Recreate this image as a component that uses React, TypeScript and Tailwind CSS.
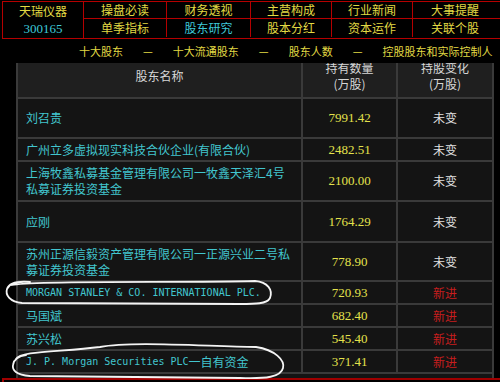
import React from 'react'

const navTop = ['操盘必读', '财务透视', '主营构成', '行业新闻', '大事提醒']
const navBottom = ['单季指标', '股东研究', '股本分红', '资本运作', '关联个股']
const navWidths = ['w-[83px]', 'w-[84px]', 'w-[81px]', 'w-[81px]', 'w-[84px]']

const subNav = ['十大股东', '—', '十大流通股东', '—', '股东人数', '—', '控股股东和实际控制人']

type Row = { name: string[]; qty: string; chg: string; h: string; mono?: boolean }

const rows: Row[] = [
  { name: ['刘召贵'], qty: '7991.42', chg: '未变', h: 'h-[40px]' },
  { name: ['广州立多虚拟现实科技合伙企业(有限合伙)'], qty: '2482.51', chg: '未变', h: 'h-[23px]' },
  { name: ['上海牧鑫私募基金管理有限公司一牧鑫天泽汇4号', '私募证券投资基金'], qty: '2100.00', chg: '未变', h: 'h-[40px]' },
  { name: ['应刚'], qty: '1764.29', chg: '未变', h: 'h-[41px]' },
  { name: ['苏州正源信毅资产管理有限公司一正源兴业二号私', '募证券投资基金'], qty: '778.90', chg: '未变', h: 'h-[39px]' },
  { name: ['MORGAN STANLEY & CO. INTERNATIONAL PLC.'], qty: '720.93', chg: '新进', h: 'h-[23px]', mono: true },
  { name: ['马国斌'], qty: '682.40', chg: '新进', h: 'h-[23px]' },
  { name: ['苏兴松'], qty: '545.40', chg: '新进', h: 'h-[23px]' },
  { name: ['J. P. Morgan Securities PLC', '一自有资金'], qty: '371.41', chg: '新进', h: 'h-[23px]', mono: true },
]

function NameCell({ row }: { row: Row }) {
  if (row.mono) {
    return (
      <div className="flex items-center pl-[8px] border-r-2 border-[#3a3a3a] whitespace-nowrap text-[#42c6cf]">
        <span className="font-['DejaVu_Sans_Mono',monospace] text-[10px]">{row.name[0]}</span>
        {row.name[1] && <span className="text-[12px]">{row.name[1]}</span>}
      </div>
    )
  }
  return (
    <div className="flex flex-col justify-center pl-[8px] border-r-2 border-[#3a3a3a] whitespace-nowrap text-[12px] leading-[16px] text-[#42c6cf]">
      {row.name.map(line => <span key={line}>{line}</span>)}
    </div>
  )
}

export default function App() {
  return (
    <div className="relative w-[500px] h-[382px] overflow-hidden bg-black font-['Noto_Sans_CJK_SC',sans-serif]">
      {/* top menu */}
      <div className="flex ml-[2px] mt-[1px] w-[560px] border-t border-l border-b border-[#b40000] text-[12px] text-[#e2da44]">
        <div className="w-[81px] h-[36px] flex flex-col items-center justify-center border-r border-[#b40000] leading-[18px]">
          <span>天瑞仪器</span>
          <span className="font-['Liberation_Serif',serif] text-[13px] text-[#3ec8d8]">300165</span>
        </div>
        <div className="flex flex-col flex-1">
          <div className="flex h-[17px] border-b border-[#b40000]">
            {navTop.map((t, i) => (
              <div key={t} className={`${navWidths[i]} flex items-center justify-center ${i < 4 ? 'border-r border-[#b40000]' : ''}`}>{t}</div>
            ))}
          </div>
          <div className="flex h-[18px]">
            {navBottom.map((t, i) => (
              <div key={t} className={`${navWidths[i]} flex items-center justify-center ${i < 4 ? 'border-r border-[#b40000]' : ''} ${t === '股东研究' ? 'text-[#3ec8d8]' : ''}`}>{t}</div>
            ))}
          </div>
        </div>
      </div>

      {/* sub menu */}
      <div className="h-[24px] flex items-center gap-[20px] pl-[79px] whitespace-nowrap text-[11px] text-[#e2da44]">
        {subNav.map((t, i) => <span key={i}>{t}</span>)}
      </div>

      {/* holders table */}
      <div className="ml-[16px] w-[478px] border-l-2 border-r-2 border-[#3a3a3a] bg-[#141414] pb-[4px]">
        <div className="h-[36px] overflow-hidden bg-[#1f1f1f] border-b-2 border-[#3a3a3a]">
          <div className="grid grid-cols-[285px_95px_94px] h-[47px] -mt-[11px] text-[12px] leading-[16px] text-[#d6d6d6]">
            <div className="flex items-center justify-center border-r-2 border-[#3a3a3a]">股东名称</div>
            <div className="flex flex-col items-center justify-center border-r-2 border-[#3a3a3a]">
              <span>持有数量</span>
              <span>(万股)</span>
            </div>
            <div className="flex flex-col items-center justify-center">
              <span>持股变化</span>
              <span>(万股)</span>
            </div>
          </div>
        </div>
        {rows.map(row => (
          <div key={row.qty} className={`grid grid-cols-[285px_95px_94px] ${row.h} border-b-2 border-[#3a3a3a]`}>
            <NameCell row={row} />
            <div className="flex items-center justify-center border-r-2 border-[#3a3a3a] font-['Liberation_Serif',serif] text-[13px] text-[#e4e24c]">
              {row.qty}
            </div>
            <div className={`flex items-center justify-center text-[12px] ${row.chg === '新进' ? 'text-[#c81e1e]' : 'text-[#e2e2e2]'}`}>
              {row.chg}
            </div>
          </div>
        ))}
      </div>
      <div className="ml-[2px] h-[12px] border-t-2 border-l-2 border-[#a00000]" />

      {/* hand drawn marks */}
      <svg className="absolute inset-0 pointer-events-none" width="500" height="382" viewBox="0 0 500 382" fill="none">
        <path
          d="M12 285 C30 280 190 283 255 281 C268 282 273 290 270 298 C267 304 255 304 240 304 L22 303 C10 302 5 295 7 289 C9 283 18 281 30 282"
          stroke="#f4f4f4" strokeWidth="1.8" strokeLinecap="round"
        />
        <path
          d="M16 359 C20 351 60 352 100 347 C130 341 200 346 256 347 C275 350 285 360 283 368 C281 377 266 379 240 378 L30 376 C16 375 12 370 13 365 C14 359 18 356 26 355"
          stroke="#f4f4f4" strokeWidth="1.8" strokeLinecap="round"
        />
      </svg>
    </div>
  )
}
